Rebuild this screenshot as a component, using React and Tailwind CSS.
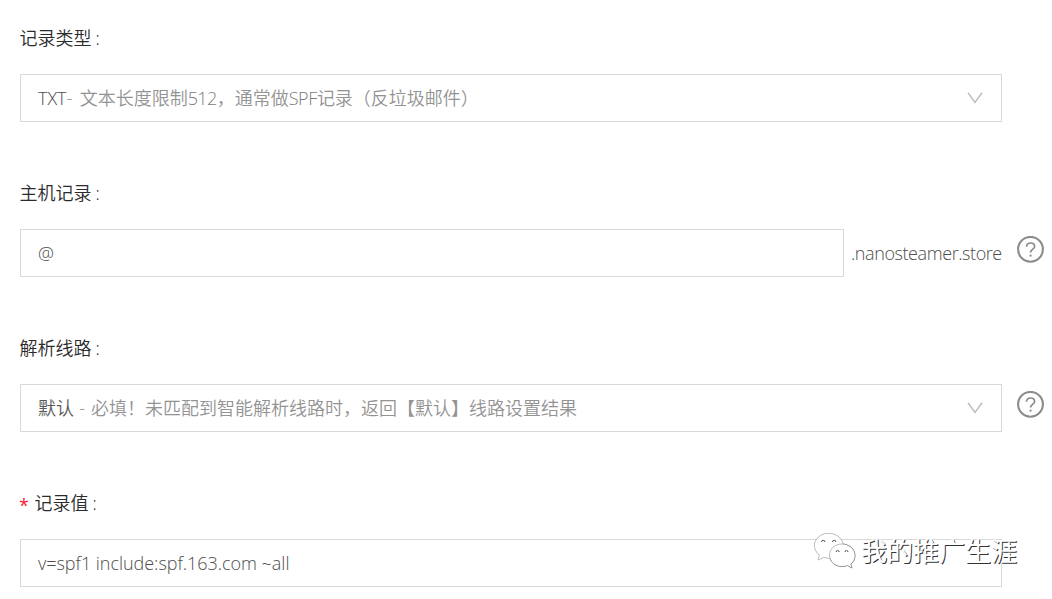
const Chevron = () => (
  <svg className="h-[14px] w-[18px] shrink-0" viewBox="0 0 18 14" fill="none" stroke="#bfbfbf" strokeWidth="1.5">
    <path d="M2 1.8 L9 11.4 L16 1.8" />
  </svg>
);

const Help = () => (
  <svg className="-mt-[7px] ml-[15px] h-[28px] w-[28px] shrink-0" viewBox="0 0 28 28" fill="none" stroke="#8c8c8c">
    <circle cx="13.5" cy="13.3" r="12.4" strokeWidth="2.1" />
    <path d="M9.6 10.700 C9.6 8.300 11.3 7 13.6 7 C15.9 7 17.6 8.400 17.6 10.500 C17.6 13.100 13.6 13.200 13.6 16.600" strokeWidth="1.7" />
    <circle cx="13.6" cy="19.700" r="1.1" fill="#8c8c8c" stroke="none" />
  </svg>
);

const Label = ({ children, required }) => (
  <div className="flex h-[74px] items-center pt-px text-[#2b2b2b]">
    {required && <span className="-ml-px mr-[6px] pt-[4px] font-normal text-[#f5222d]">*</span>}
    <span className="-ml-[0.5px]">{children}</span>
    <span className="ml-[4px]">:</span>
  </div>
);

const box = "flex h-[48px] shrink-0 items-center border border-[#d9d9d9] bg-white pl-[17px] pr-[17px] text-[#4d4d4d]";

export default function App() {
  return (
    <main className="relative h-[599px] w-[1052px] overflow-hidden bg-white pl-[20px] font-['Open_Sans','Noto_Sans_CJK_SC',sans-serif] text-[18px] leading-[28px] font-[350]">
      <section className="h-[155px]">
        <Label>记录类型</Label>
        <div className={`${box} w-[982px] justify-between`}>
          <span className="whitespace-pre">
            TXT
            <span className="text-[#939393]">
              <span className="tracking-[1.3px]">- </span>文本长度限制<span className="tracking-[-0.6px] text-[#7a7a7a]">512</span>，通常做<span className="tracking-[-0.4px] text-[#7a7a7a]">SPF</span>记录（反垃圾邮件）
            </span>
          </span>
          <Chevron />
        </div>
      </section>
      <section className="h-[155px]">
        <Label>主机记录</Label>
        <div className="flex items-center">
          <div className={`${box} w-[824px]`}>@</div>
          <span className="w-[158px] shrink-0 pl-[7px] tracking-[-0.42px] text-[#4d4d4d]">.nanosteamer.store</span>
          <Help />
        </div>
      </section>
      <section className="h-[155px]">
        <Label>解析线路</Label>
        <div className="flex items-center">
          <div className={`${box} w-[982px] justify-between`}>
            <span className="whitespace-pre">
              <span className="text-[#595959]">默认</span>
              <span className="text-[#939393]">
                <span className="tracking-[0.6px]"> - </span>必填！未匹配到智能解析线路时，返回【默认】线路设置结果
              </span>
            </span>
            <Chevron />
          </div>
          <Help />
        </div>
      </section>
      <section>
        <Label required>记录值</Label>
        <div className={`${box} w-[982px] tracking-[-0.03px]`}>v=spf1 include:spf.163.com ~all</div>
      </section>
      <div className="absolute left-[812px] top-[531px] flex items-center">
        <svg className="h-[40px] w-[46px] [filter:drop-shadow(0.5px_0.7px_0.4px_#555)]" viewBox="0 0 46 40" fill="#fff" stroke="#ccc" strokeWidth="0.5">
          <path d="M16.5 2.5 C8.5 2.5 2.500 8 2.500 14.500 C2.500 18.500 4.500 21.500 7.500 24 L6 29 L11.500 26.200 C13.500 26.800 15 27 17.500 27 C25 27 31 21.500 31 14.500 C31 7.500 24.500 2.500 16.500 2.500 Z" />
          <path d="M30 13 C22.800 13 17.500 18 17.500 24.300 C17.500 30.500 23 35.500 30 35.500 C32 35.500 34 35.200 35.500 34.500 L40 37 L38.800 33 C41.500 31 43 28 43 24.500 C43 18 37 13 30 13 Z" stroke="#777" />
          <g fill="none" stroke="#555" strokeWidth="1">
            <path d="M9.500 11 A1.700 1.700 0 0 1 12.900 11" />
            <path d="M20.500 11 A1.700 1.700 0 0 1 23.900 11" />
            <path d="M24.200 21 A1.500 1.500 0 0 1 27.200 21" />
            <path d="M33 21 A1.500 1.500 0 0 1 36 21" />
          </g>
        </svg>
        <span className="ml-[3px] text-[26px] leading-[40px] font-normal text-white [text-shadow:1px_1px_0.5px_#333]">我的推广生涯</span>
      </div>
    </main>
  );
}
